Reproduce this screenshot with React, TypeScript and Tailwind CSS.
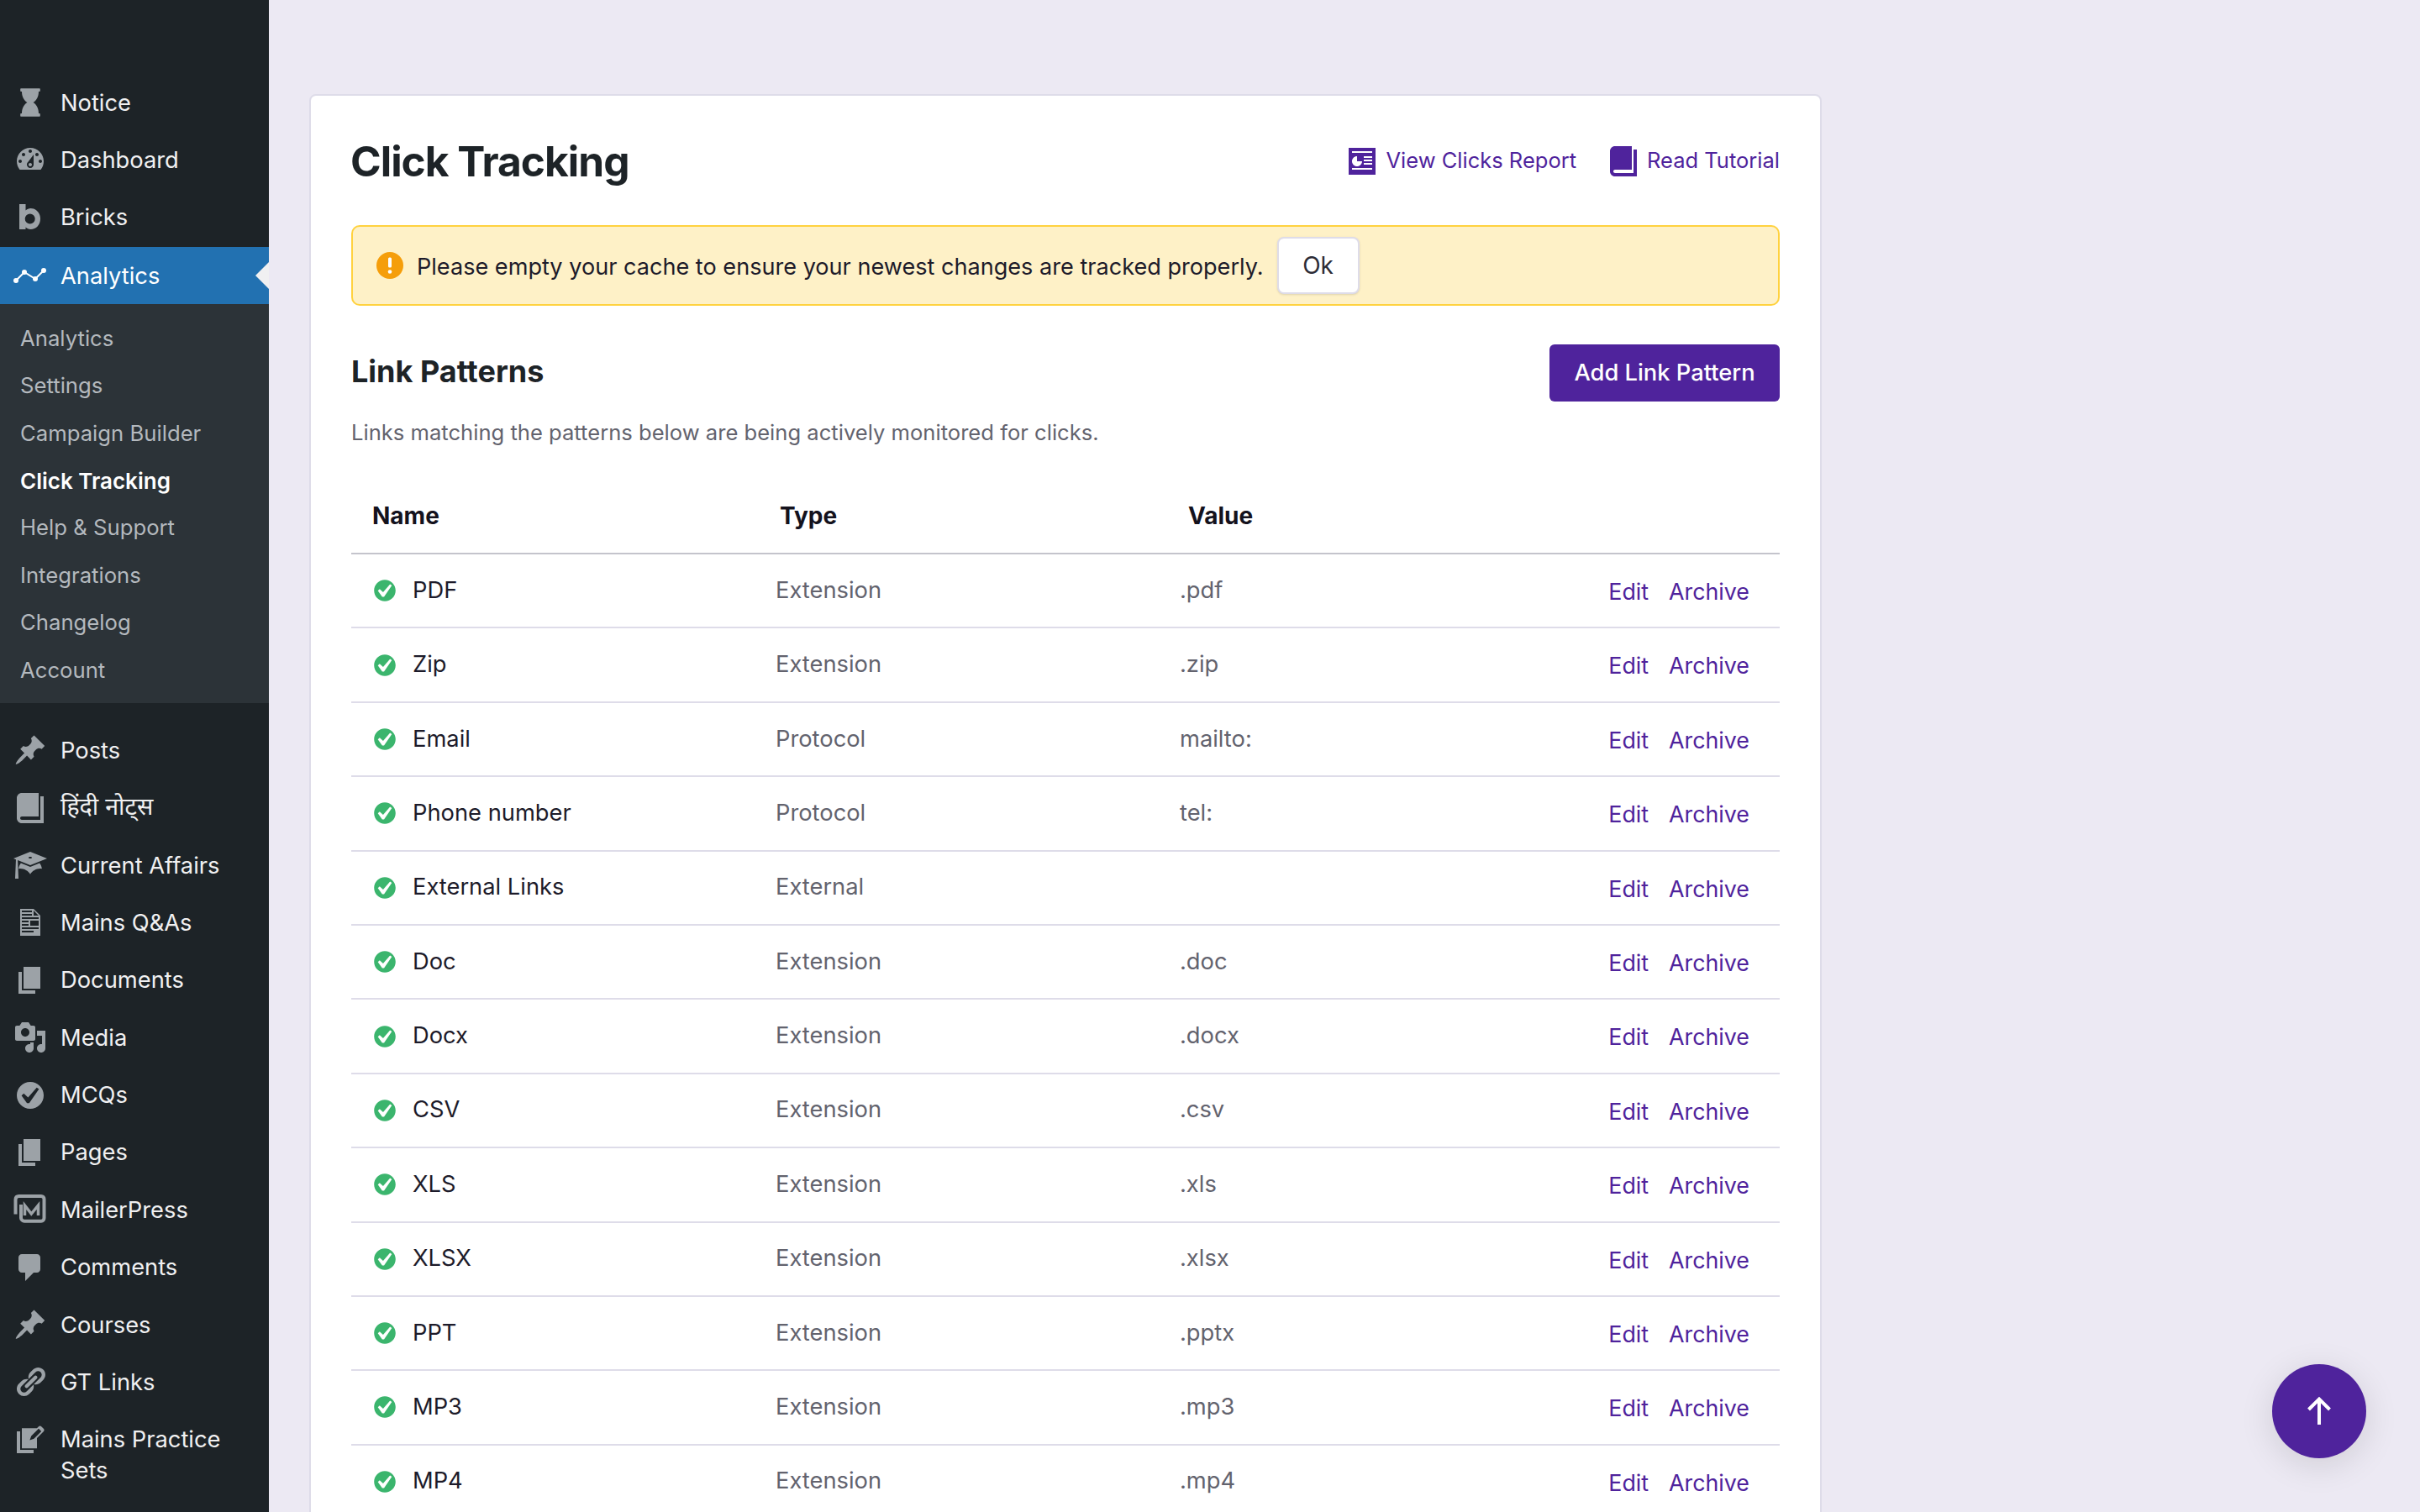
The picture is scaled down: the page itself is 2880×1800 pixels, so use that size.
import { ReactNode } from "react";

const font = { fontFamily: "Inter, 'Noto Sans', sans-serif" };

const paths: Record<string, string> = {
  dashboard:
    "M3.76 16h12.48c1.1-1.37 1.76-3.11 1.76-5 0-4.42-3.58-8-8-8s-8 3.58-8 8c0 1.89.66 3.63 1.76 5zM10 4c.55 0 1 .45 1 1s-.45 1-1 1-1-.45-1-1 .45-1 1-1zM6 6c.55 0 1 .45 1 1s-.45 1-1 1-1-.45-1-1 .45-1 1-1zm8 0c.55 0 1 .45 1 1s-.45 1-1 1-1-.45-1-1 .45-1 1-1zm-5.37 5.55L12 7v6c0 1.1-.9 2-2 2s-2-.9-2-2c0-.57.24-1.08.63-1.45zM4 10c.55 0 1 .45 1 1s-.45 1-1 1-1-.45-1-1 .45-1 1-1zm12 0c.55 0 1 .45 1 1s-.45 1-1 1-1-.45-1-1 .45-1 1-1zm-5 3c0-.55-.45-1-1-1s-1 .45-1 1 .45 1 1 1 1-.45 1-1z",
  pin: "M10.44 3.02l1.82-1.82 6.36 6.35-1.83 1.82c-1.05-.68-2.48-.57-3.41.36l-.75.75c-.92.93-1.04 2.35-.35 3.41l-1.83 1.82-2.41-2.41-2.8 2.79c-.42.42-3.38 2.71-3.8 2.29s1.86-3.39 2.28-3.81l2.79-2.79L4.1 9.36l1.83-1.82c1.05.69 2.48.57 3.4-.36l.75-.75c.93-.92 1.05-2.35.36-3.41z",
  page: "M6 15V2h10v13H6zm-1 1h8v2H3V5h2v11z",
  media:
    "M13 11V4c0-.55-.45-1-1-1h-1.67L9 1H5L3.67 3H2c-.55 0-1 .45-1 1v7c0 .55.45 1 1 1h10c.55 0 1-.45 1-1zM7 4.5c1.38 0 2.5 1.12 2.5 2.5S8.38 9.5 7 9.5 4.5 8.38 4.5 7 5.62 4.5 7 4.5zM14 6h5v10.5c0 1.38-1.12 2.5-2.5 2.5S14 17.88 14 16.5s1.12-2.5 2.5-2.5c.17 0 .34.02.5.05V9h-3V6zm-4 8.05V13h2v3.5c0 1.38-1.12 2.5-2.5 2.5S7 17.88 7 16.5 8.12 14 9.5 14c.17 0 .34.02.5.05z",
  comment: "M5 2h9c1.1 0 2 .9 2 2v7c0 1.1-.9 2-2 2h-2l-5 5v-5H5c-1.1 0-2-.9-2-2V4c0-1.1.9-2 2-2z",
  book: "M16 3h2v16H5c-1.66 0-3-1.34-3-3V4c0-1.66 1.34-3 3-3h10v14H5c-.55 0-1 .45-1 1s.45 1 1 1h11V3z",
  link: "M17.74 2.76c1.68 1.69 1.68 4.41 0 6.1l-1.53 1.52c-1.12 1.12-2.7 1.47-4.14 1.09l2.62-2.61.76-.77.76-.76c.84-.84.84-2.2 0-3.04-.84-.85-2.2-.85-3.04 0l-.77.76-3.38 3.38c-.37-1.44-.02-3.02 1.1-4.14l1.52-1.53c1.69-1.68 4.42-1.68 6.1 0zM8.59 13.43l5.34-5.34c.42-.42.42-1.1 0-1.52-.44-.43-1.13-.39-1.53 0l-5.33 5.34c-.42.42-.42 1.1 0 1.52.44.43 1.13.39 1.52 0zm-.76 2.29l4.14-4.15c.38 1.44.03 3.02-1.09 4.14l-1.52 1.53c-1.69 1.68-4.41 1.68-6.1 0-1.68-1.68-1.68-4.42 0-6.1l1.53-1.52c1.12-1.12 2.7-1.47 4.14-1.1l-4.14 4.15c-.85.84-.85 2.2 0 3.05.84.84 2.2.84 3.04 0z",
  cap: "M10 10L2.54 7.02 3 18H1l.48-11.41L0 6l10-4 10 4zm0-5c-.55 0-1 .22-1 .5s.45.5 1 .5 1-.22 1-.5-.45-.5-1-.5zm0 6l5.57-2.23c.71.94 1.2 2.07 1.36 3.3-.3-.04-.61-.07-.93-.07-2.55 0-4.78 1.37-6 3.41C8.78 13.37 6.55 12 4 12c-.32 0-.63.03-.93.07.16-1.23.65-2.36 1.36-3.3z",
  doc: "M12 2l4 4v12H4V2h8zM5 3v1h6V3H5zm7 3h3l-3-3v3zM5 5v1h6V5H5zm10 3V7H5v1h10zM5 9v1h4V9H5zm10 3V9h-5v3h5zM5 11v1h4v-1H5zm10 3v-1H5v1h10zm-3 2v-1H5v1h7z",
  yes: "M10 2c-4.42 0-8 3.58-8 8s3.58 8 8 8 8-3.58 8-8-3.58-8-8-8zm-.615 12.66h-1.34l-3.24-4.54 1.34-1.25 2.57 2.4 5.14-5.93 1.34.94-5.81 8.38z",
  edit: "M4 5H2v13h10v-2H4V5zm13.9-1.6l-1.3-1.3c-.4-.4-1.1-.5-1.6 0l-1 1H5v12h9V9l4-4c.4-.5.4-1.2-.1-1.6zm-5.7 6l-2.5.9.9-2.5L15 3.4 16.6 5l-4.4 4.4z",
  hourglass: "M4.6 1.6h10.8c.3 0 .5.2.5.5v.9c0 .3-.2.5-.5.5H15c0 3-1.2 5.2-3.2 6.5 2 1.3 3.2 3.5 3.2 6.5h.4c.3 0 .5.2.5.5v.9c0 .3-.2.5-.5.5H4.6c-.3 0-.5-.2-.5-.5V17c0-.3.2-.5.5-.5H5c0-3 1.2-5.2 3.2-6.5C6.2 8.700 5 6.500 5 3.500h-.4c-.3 0-.5-.2-.5-.5v-.9c0-.3.2-.5.5-.5z",
  report:
    "M18 18V2H2v16h16zM16 5H4V4h12v1zM7 7v3h3c0 1.660-1.340 3-3 3s-3-1.340-3-3 1.340-3 3-3zm9 0v1h-5V7h5zm0 2v1h-5V9h5zm0 2v1h-5v-1h5zm0 3v1H4v-1h12z",
};

function Dash({ name, className }: { name: string; className: string }) {
  return (
    <svg viewBox="0 0 20 20" className={className} fill="currentColor" fillRule="evenodd">
      <path d={paths[name]} />
    </svg>
  );
}

function BricksIcon() {
  return (
    <svg viewBox="0 0 40 40" className="h-10 w-10" fill="currentColor" fillRule="evenodd">
      <path d="M7 5H14.500V12.500C16 11 18.500 10 20.500 10C27 10 32 15.500 32 22.500S27 35 20.500 35C18 35 16 34 14.500 32.500V35H7ZM19.700 16.500A6 6 0 1 0 19.700 28.500A6 6 0 1 0 19.700 16.500Z" />
    </svg>
  );
}

function AnalyticsIcon() {
  return (
    <svg viewBox="0 0 40 40" className="h-10 w-10 text-white" fill="currentColor">
      <path d="M3 26 L13 16 L26 24 L36 14" stroke="currentColor" strokeWidth="2" fill="none" />
      <circle cx="3" cy="26" r="3" />
      <circle cx="13" cy="16" r="3" />
      <circle cx="26" cy="24" r="3" />
      <circle cx="36" cy="14" r="3" />
    </svg>
  );
}

function MailerIcon() {
  return (
    <svg viewBox="0 0 40 40" className="h-10 w-10" fill="none" stroke="currentColor">
      <path d="M2.500 25.500V8C2.500 5.500 4 4 6.500 4H33C35 4 36.500 5.500 36.500 7.500V30C36.500 32 35 33.700 33 33.700H13C11 33.700 9 32 9 30V14" strokeWidth="4" />
      <path d="M13.500 27V15L21.300 25L29.500 15V27" strokeWidth="3.500" />
    </svg>
  );
}

function MenuItem({ icon, label, active, hindi }: { icon: ReactNode; label: string; active?: boolean; hindi?: boolean }) {
  return (
    <div
      className={`relative flex pl-4 pr-3 text-[27.3px] leading-[37px] ${
        active ? "bg-[#2271b1] py-[15.5px] text-white" : "py-[15.7px] text-[#f0f0f1]"
      }`}
    >
      <div className={`flex h-[37px] w-10 shrink-0 items-center justify-center ${active ? "text-white" : "text-[#9ca2a7]"}`}>
        {icon}
      </div>
      <span className={hindi ? "ml-4 -translate-y-[2px] text-[28.6px]" : "ml-4"}>{label}</span>
      {active && (
        <div className="absolute right-0 top-[18px] h-0 w-0 border-y-[16px] border-r-[16px] border-y-transparent border-r-[#f0f0f1]" />
      )}
    </div>
  );
}

const subItems = ["Analytics", "Settings", "Campaign Builder", "Click Tracking", "Help & Support", "Integrations", "Changelog", "Account"];

const lowerItems: [string, string][] = [
  ["pin", "Posts"],
  ["book", "हिंदी नोट्स"],
  ["cap", "Current Affairs"],
  ["doc", "Mains Q&As"],
  ["page", "Documents"],
  ["media", "Media"],
  ["yes", "MCQs"],
  ["page", "Pages"],
  ["mailer", "MailerPress"],
  ["comment", "Comments"],
  ["pin", "Courses"],
  ["link", "GT Links"],
  ["edit", "Mains Practice Sets"],
];

const rows = [
  ["PDF", "Extension", ".pdf"],
  ["Zip", "Extension", ".zip"],
  ["Email", "Protocol", "mailto:"],
  ["Phone number", "Protocol", "tel:"],
  ["External Links", "External", ""],
  ["Doc", "Extension", ".doc"],
  ["Docx", "Extension", ".docx"],
  ["CSV", "Extension", ".csv"],
  ["XLS", "Extension", ".xls"],
  ["XLSX", "Extension", ".xlsx"],
  ["PPT", "Extension", ".pptx"],
  ["MP3", "Extension", ".mp3"],
  ["MP4", "Extension", ".mp4"],
];

function Sidebar() {
  return (
    <aside className="h-full w-[320px] shrink-0 bg-[#1d2327] pt-[88px]">
      <div className="flex h-[68px] flex-col justify-center">
        <MenuItem icon={<Dash name="hourglass" className="h-10 w-10" />} label="Notice" />
      </div>
      <div className="flex h-[68px] flex-col justify-center">
        <MenuItem icon={<Dash name="dashboard" className="h-10 w-10" />} label="Dashboard" />
      </div>
      <div className="mb-[2px] flex h-[68px] flex-col justify-center">
        <MenuItem icon={<BricksIcon />} label="Bricks" />
      </div>
      <MenuItem icon={<AnalyticsIcon />} label="Analytics" active />
      <div className="bg-[#2c3338] pt-[13px] pb-[11px]">
        {subItems.map((item) => (
          <div
            key={item}
            className={`flex h-[56.4px] items-center pl-6 ${
              item === "Click Tracking" ? "text-[26px] font-semibold text-white" : "text-[25.7px] text-[#b4b9be]"
            }`}
          >
            {item}
          </div>
        ))}
      </div>
      <div className="mt-[22px]">
        {lowerItems.map(([icon, label]) => (
          <MenuItem
            key={label}
            label={label}
            hindi={icon === "book"}
            icon={icon === "mailer" ? <MailerIcon /> : <Dash name={icon} className="h-10 w-10" />}
          />
        ))}
      </div>
    </aside>
  );
}

function PatternRow({ row }: { row: string[] }) {
  return (
    <div className="flex h-[88.4px] items-center border-b-2 border-[#dedce9] text-[27.3px]">
      <div className="flex w-[505px] items-center pl-[27px] text-[#1d1b2a]">
        <Dash name="yes" className="-mx-[3px] h-[32px] w-[32px] text-[#3bb56d]" />
        <span className="ml-[20px]">{row[0]}</span>
      </div>
      <div className="w-[481px] text-[#63636e]">{row[1]}</div>
      <div className="flex-1 text-[#63636e]">{row[2]}</div>
      <div className="flex gap-6 pr-[36px] pt-[2px] text-[26.8px] text-[#4f239c]">
        <span>Edit</span>
        <span>Archive</span>
      </div>
    </div>
  );
}

export default function App() {
  return (
    <div className="relative flex h-[1800px] w-[2880px] overflow-hidden bg-[#ece9f3] antialiased" style={font}>
      <Sidebar />
      <main className="flex-1 pl-[48px] pt-[112px]">
        <div className="w-[1800px] rounded-t-lg border-2 border-[#dedce9] bg-white px-[48px] pt-[50px]">
          <div className="flex h-[56px] items-center justify-between">
            <h1 className="-ml-[1px] text-[49.6px] font-bold tracking-[-1px] text-[#1d2327]">Click Tracking</h1>
            <div className="-mt-[1px] flex items-center text-[25.5px] text-[#4f239c]">
              <Dash name="report" className="h-10 w-10" />
              <span className="ml-2">View Clicks Report</span>
              <Dash name="book" className="ml-9 h-10 w-10" />
              <span className="ml-2">Read Tutorial</span>
            </div>
          </div>
          <div className="mt-12 flex h-[96px] items-center rounded-[10px] border-2 border-[#ffd23f] bg-[#fef1c7] pl-[28px] text-[27.1px] text-[#1d1b2a]">
            <svg viewBox="0 0 32 32" className="h-8 w-8 shrink-0">
              <circle cx="16" cy="16" r="16" fill="#f59e0b" />
              <rect x="14" y="6.500" width="4" height="12" rx="1.500" fill="#fff" />
              <circle cx="16" cy="23.500" r="2.300" fill="#fff" />
            </svg>
            <span className="ml-[16px] pt-[4px]">Please empty your cache to ensure your newest changes are tracked properly.</span>
            <button className="ml-4 flex h-[68px] w-[98px] items-center justify-center rounded-lg border-2 border-[#dedce9] bg-white text-[28px] text-[#2c2c36] shadow-sm">
              Ok
            </button>
          </div>
          <div className="mt-[46px] flex items-start justify-between">
            <h2 className="mt-[8px] text-[36px] leading-[48px] font-bold text-[#1d2327]">Link Patterns</h2>
            <button className="flex h-[68px] w-[274px] items-center justify-center rounded-[6px] bg-[#4f239c] text-[27.3px] font-medium text-white">
              Add Link Pattern
            </button>
          </div>
          <p className="mt-[22px] text-[25.6px] leading-[30px] text-[#63636e]">
            Links matching the patterns below are being actively monitored for clicks.
          </p>
          <div className="mt-10 flex h-[90px] items-center border-b-2 border-[#c4c4cc] text-[28px] font-bold text-[#14121d]">
            <div className="w-[510px] pl-[25px]">Name</div>
            <div className="w-[486px]">Type</div>
            <div>Value</div>
          </div>
          {rows.map((row) => (
            <PatternRow key={row[0]} row={row} />
          ))}
        </div>
      </main>
      <button className="absolute left-[2704px] top-[1624px] flex h-[112px] w-[112px] items-center justify-center rounded-full bg-[#4f239c] shadow-[0_8px_40px_rgba(0,0,0,0.12)]">
        <svg viewBox="0 0 32 36" className="h-9 w-8" fill="none" stroke="#fff" strokeWidth="4">
          <path d="M16 34V4" />
          <path d="M3.500 16L16 3.500L28.500 16" />
        </svg>
      </button>
    </div>
  );
}
